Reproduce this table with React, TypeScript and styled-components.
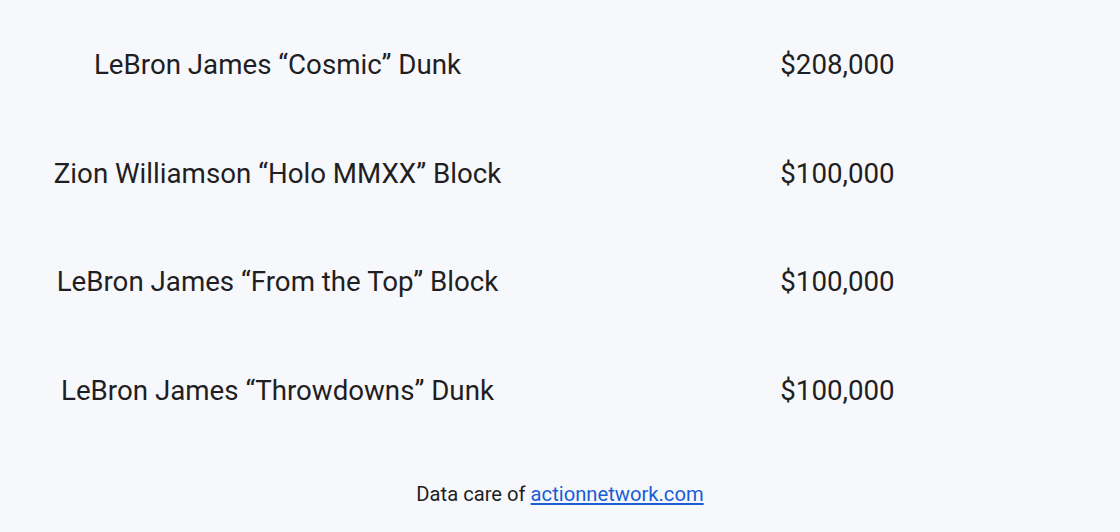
import React from 'react';
import styled, { createGlobalStyle } from 'styled-components';

const GlobalStyle = createGlobalStyle`
  html, body {
    margin: 0;
    padding: 0;
    background: #f7f8fc;
  }
  body {
    font-family: Roboto, "Liberation Sans", sans-serif;
    color: #1f1f23;
  }
`;

const rows = [
  { name: 'LeBron James “Cosmic” Dunk', price: '$208,000' },
  { name: 'Zion Williamson “Holo MMXX” Block', price: '$100,000' },
  { name: 'LeBron James “From the Top” Block', price: '$100,000' },
  { name: 'LeBron James “Throwdowns” Dunk', price: '$100,000' },
];

function App() {
  return (
    <Page>
      <GlobalStyle />
      <SalesTable>
        {rows.map((row) => (
          <Row key={row.name}>
            <Cell>{row.name}</Cell>
            <Cell>{row.price}</Cell>
          </Row>
        ))}
      </SalesTable>
      <Credit>
        Data care of <a href="#">actionnetwork.com</a>
      </Credit>
    </Page>
  );
}

const Page = styled.div`
  width: 1120px;
  height: 532px;
  padding-top: 11px;
  box-sizing: border-box;
  overflow: hidden;
`;

const SalesTable = styled.div`
  display: flex;
  flex-direction: column;
`;

const Row = styled.div`
  display: grid;
  grid-template-columns: 555px 1fr;
  height: 108.5px;
  align-items: center;
`;

const Cell = styled.div`
  text-align: center;
  font-size: 27.7px;
  line-height: 32px;
  white-space: nowrap;
`;

const Credit = styled.p`
  margin: 37px 0 0;
  text-align: center;
  font-size: 20.2px;
  line-height: 24px;

  a {
    color: #1a5dd6;
    text-decoration: underline;
  }
`;

export default App;
